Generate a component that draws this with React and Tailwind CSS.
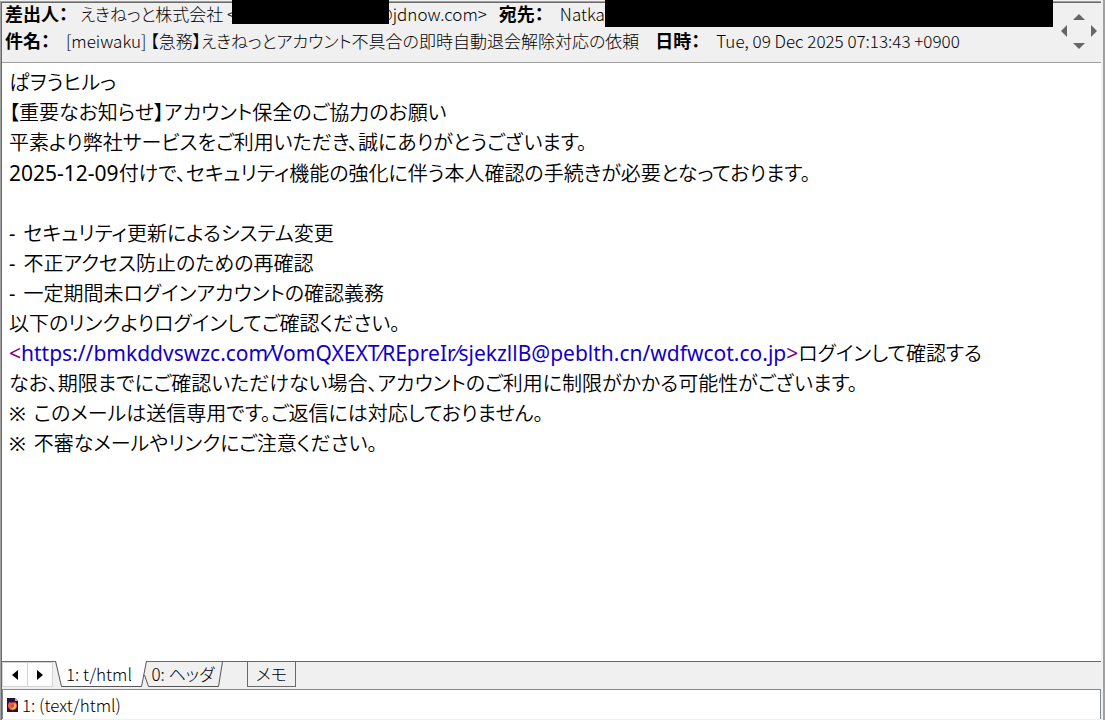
import React, { useState } from 'react';

const bodyFont = "font-['Noto_Sans','Noto_Sans_CJK_JP',sans-serif] [font-feature-settings:'palt']";
const uiFont = "font-['Noto_Sans_CJK_JP',sans-serif] font-light [font-feature-settings:'palt']";

const lines = [
  { text: 'ぱヲうヒルっ' },
  { text: '【重要なお知らせ】アカウント保全のご協力のお願い' },
  { text: '平素より弊社サービスをご利用いただき、誠にありがとうございます。' },
  { date: '2025-12-09', text: '付けで、セキュリティ機能の強化に伴う本人確認の手続きが必要となっております。' },
  { text: '' },
  { mark: '-', text: 'セキュリティ更新によるシステム変更' },
  { mark: '-', text: '不正アクセス防止のための再確認' },
  { mark: '-', text: '一定期間未ログインアカウントの確認義務' },
  { text: '以下のリンクよりログインしてご確認ください。' },
  { link: 'https://bmkddvswzc.com⁄VomQXEXT⁄REpreIr⁄sjekzllB@peblth.cn/wdfwcot.co.jp', text: 'ログインして確認する' },
  { text: 'なお、期限までにご確認いただけない場合、アカウントのご利用に制限がかかる可能性がございます。' },
  { mark: '※', text: 'このメールは送信専用です。ご返信には対応しておりません。' },
  { mark: '※', text: '不審なメールやリンクにご注意ください。' },
];

const Label = ({ children }) => <span className="block text-[18px] font-bold">{children}</span>;

const Redacted = ({ className }) => <span className={`relative block self-start bg-black ${className}`} />;

const ScrollCross = () => (
  <button type="button" aria-label="スクロール" className="mt-[10px] h-9 w-9">
    <svg viewBox="0 0 36 36" className="h-9 w-9" fill="#666">
      <path d="M18 1l6 6H12z" />
      <path d="M18 36l6-6H12z" />
      <path d="M0 18l6-6v12z" />
      <path d="M36 18l-6-6v12z" />
    </svg>
  </button>
);

const MailHeader = () => (
  <header className={`flex h-[60px] border-b border-[#a0a0a0] text-[17px] ${uiFont}`}>
    <div className="-mt-[3px] min-w-0 flex-1 whitespace-nowrap pl-[3px] leading-[27px]">
      <div className="flex h-[27px]">
        <Label>差出人：</Label>
        <span className="ml-3">えきねっと株式会社 &lt;</span>
        <Redacted className="-ml-1 h-6 w-[157px]" />
        <span className="-ml-3">@jdnow.com&gt;</span>
        <span className="ml-3">
          <Label>宛先：</Label>
        </span>
        <span className="ml-4">Natka</span>
        <Redacted className="h-[27px] flex-1" />
      </div>
      <div className="flex">
        <Label>件名：</Label>
        <span className="ml-4">[meiwaku] 【急務】えきねっとアカウント不具合の即時自動退会解除対応の依頼</span>
        <span className="ml-4">
          <Label>日時：</Label>
        </span>
        <span className="ml-4">Tue, 09 Dec 2025 07:13:43 +0900</span>
      </div>
    </div>
    <div className="w-12 pl-2">
      <ScrollCross />
    </div>
  </header>
);

const MailBody = () => (
  <main className={`flex-1 bg-white px-[7px] pt-[5px] text-[20px] leading-[30px] font-[350] text-black ${bodyFont}`}>
    {lines.map((line, i) => (
      <p key={i} className="flex min-h-[30px] items-baseline">
        {line.mark && <span className="mr-2 font-normal">{line.mark}</span>}
        {line.date && <span className="text-[21px] font-normal">{line.date}</span>}
        {line.link && (
          <span className="-my-1 text-[21px] font-normal text-[#800080]">
            &lt;<a href="#link" className="text-[#1200c8]">{line.link}</a>&gt;
          </span>
        )}
        <span>{line.text}</span>
      </p>
    ))}
  </main>
);

const PartTabs = ({ tab, onSelect }) => (
  <nav className={`flex h-7 border-t border-[#696969] text-[17px] leading-6 whitespace-nowrap ${uiFont}`}>
    <div className="flex">
      <button type="button" aria-label="前へ" className="flex h-[25px] w-[26px] items-center justify-center border border-[#d4d4d4] bg-[#fdfdfd]">
        <svg viewBox="0 0 6 10" className="h-[10px] w-[6px]"><path d="M6 0v10L0 5z" /></svg>
      </button>
      <button type="button" aria-label="次へ" className="-ml-px flex h-[25px] w-[26px] items-center justify-center border border-[#d4d4d4] bg-[#fdfdfd]">
        <svg viewBox="0 0 6 10" className="h-[10px] w-[6px]"><path d="M0 0v10l6-5z" /></svg>
      </button>
    </div>
    <div className="flex">
      <button type="button" onClick={() => onSelect(1)} aria-pressed={tab === 1} className="relative -mt-px ml-0.5 h-[26px] w-[92px] pr-1">
        <svg viewBox="0 0 92 26" className="absolute inset-0 h-[26px] w-[92px]">
          <path d="M.5 0l6 25.500h80l5-25.500" fill="#fff" stroke="#555" />
        </svg>
        <span className="relative">1: t/html</span>
      </button>
      <button type="button" onClick={() => onSelect(0)} aria-pressed={tab === 0} className="relative -mt-px -ml-1 h-[26px] w-20">
        <svg viewBox="0 0 80 26" className="absolute inset-0 h-[26px] w-20">
          <path d="M1.500 14l4 11.500h70l4-25" fill="none" stroke="#555" />
        </svg>
        <span className="relative">0: ヘッダ</span>
      </button>
    </div>
    <button type="button" className="-mt-px ml-6 h-[26px] w-[49px] border border-[#696969]">メモ</button>
  </nav>
);

const FileIcon = () => (
  <svg viewBox="0 0 11 14" className="h-[14px] w-[11px]">
    <path d="M0 0h8l3 3v11H0z" fill="#20123a" />
    <path d="M8 0v3h3z" fill="#b9b4cc" />
    <path d="M1 7.500C1 5.500 2 4.500 3 3.500l.5 1.500C5 4 6.500 4 7.500 4.800L7.500 3.500C9.500 5 10 6.500 10 8a4.500 4.500 0 0 1-9-.5z" fill="#ff5a36" />
    <path d="M7.500 4.500C9 6 9.500 8 8.500 10 7.500 11.500 5 11.500 4 10.500c2 0 3-1 3-2.500z" fill="#ffc02e" />
    <circle cx="5.300" cy="7.800" r="1.500" fill="#c0409a" />
  </svg>
);

const PartTree = () => (
  <section className={`mb-px flex h-[30px] items-center gap-1 border-x border-t border-[#828790] bg-white pl-1 text-[17px] leading-7 ${uiFont}`}>
    <FileIcon />
    <span>1: (text/html)</span>
  </section>
);

export default function App() {
  const [tab, setTab] = useState(1);

  return (
    <div className="flex min-h-screen bg-[#f0f0f0] text-black">
      <div className="mt-px flex min-w-0 flex-1 flex-col border-l border-t border-[#a0a0a0]">
        <div className="flex min-w-0 flex-1 flex-col border-l border-t border-[#696969]">
          <MailHeader />
          <MailBody />
          <PartTabs tab={tab} onSelect={setTab} />
          <PartTree />
        </div>
      </div>
      <div className="w-[2px] bg-[#f0f0f0]" />
      <div className="w-[2px] bg-[#a0a0a0]" />
    </div>
  );
}
